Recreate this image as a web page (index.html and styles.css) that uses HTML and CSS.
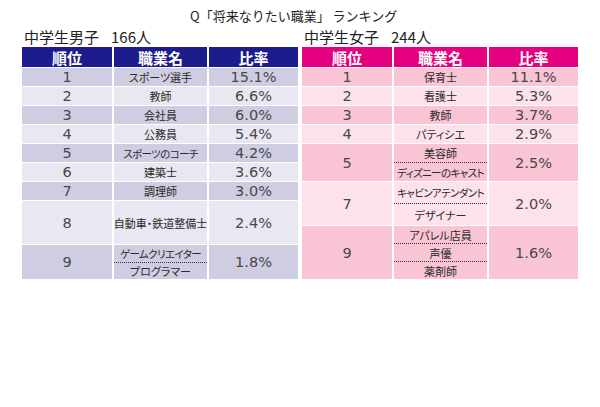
FILE: index.html
```html
<!DOCTYPE html>
<html lang="ja">
<head>
<meta charset="utf-8">
<title>将来なりたい職業ランキング</title>
<link rel="stylesheet" href="styles.css">
</head>
<body>
<div class="page">
  <div class="title">Q「将来なりたい職業」 ランキング</div>
  <div class="panels">
    <section class="panel boys">
      <div class="panel-title">中学生男子<span class="count">166人</span></div>
      <div class="grid">
        <div class="cell head">順位</div><div class="cell head">職業名</div><div class="cell head">比率</div>
        <div class="cell rank odd">1</div><div class="cell job odd">スポーツ選手</div><div class="cell pct odd">15.1%</div>
        <div class="cell rank even">2</div><div class="cell job even">教師</div><div class="cell pct even">6.6%</div>
        <div class="cell rank odd">3</div><div class="cell job odd">会社員</div><div class="cell pct odd">6.0%</div>
        <div class="cell rank even">4</div><div class="cell job even">公務員</div><div class="cell pct even">5.4%</div>
        <div class="cell rank odd">5</div><div class="cell job odd narrow">スポーツのコーチ</div><div class="cell pct odd">4.2%</div>
        <div class="cell rank even">6</div><div class="cell job even">建築士</div><div class="cell pct even">3.6%</div>
        <div class="cell rank odd">7</div><div class="cell job odd">調理師</div><div class="cell pct odd">3.0%</div>
        <div class="cell rank even">8</div><div class="cell job even">自動車・鉄道整備士</div><div class="cell pct even">2.4%</div>
        <div class="cell rank odd">9</div>
        <div class="cell multi odd"><span class="sub narrow">ゲームクリエイター</span><span class="sub">プログラマー</span></div>
        <div class="cell pct odd">1.8%</div>
      </div>
    </section>
    <section class="panel girls">
      <div class="panel-title">中学生女子<span class="count">244人</span></div>
      <div class="grid">
        <div class="cell head">順位</div><div class="cell head">職業名</div><div class="cell head">比率</div>
        <div class="cell rank odd">1</div><div class="cell job odd">保育士</div><div class="cell pct odd">11.1%</div>
        <div class="cell rank even">2</div><div class="cell job even">看護士</div><div class="cell pct even">5.3%</div>
        <div class="cell rank odd">3</div><div class="cell job odd">教師</div><div class="cell pct odd">3.7%</div>
        <div class="cell rank even">4</div><div class="cell job even">パティシエ</div><div class="cell pct even">2.9%</div>
        <div class="cell rank odd">5</div>
        <div class="cell multi odd"><span class="sub">美容師</span><span class="sub narrow">ディズニーのキャスト</span></div>
        <div class="cell pct odd">2.5%</div>
        <div class="cell rank even">7</div>
        <div class="cell multi even"><span class="sub narrow">キャビンアテンダント</span><span class="sub">デザイナー</span></div>
        <div class="cell pct even">2.0%</div>
        <div class="cell rank odd">9</div>
        <div class="cell multi odd"><span class="sub">アパレル店員</span><span class="sub">声優</span><span class="sub">薬剤師</span></div>
        <div class="cell pct odd">1.6%</div>
      </div>
    </section>
  </div>
</div>
</body>
</html>
```

FILE: styles.css
```css
html, body {
  margin: 0;
  padding: 0;
  background: #ffffff;
}

body {
  width: 600px;
  height: 407px;
  font-family: "Noto Sans CJK JP", "Noto Sans", sans-serif;
  color: #333333;
}

.page {
  padding: 6px 0 0 22px;
}

.title {
  height: 20px;
  line-height: 20px;
  font-size: 13px;
  padding-left: 168px;
  color: #222222;
  white-space: nowrap;
}

.panels {
  display: flex;
  gap: 4px;
}

.panel {
  width: 276px;
}

.panel-title {
  height: 21px;
  line-height: 21px;
  font-size: 15px;
  padding-left: 2px;
  color: #222222;
  white-space: nowrap;
}

.count {
  margin-left: 12px;
}

.grid {
  display: grid;
  grid-template-columns: 90px 93px 89px;
  column-gap: 2px;
  row-gap: 1px;
}

.boys .grid {
  grid-template-rows: 20px repeat(7, 18px) 43px 34px;
}

.girls .grid {
  grid-template-rows: 20px repeat(4, 18px) 37px 43px 53px;
}

.cell {
  display: flex;
  align-items: center;
  justify-content: center;
  white-space: nowrap;
  overflow: hidden;
}

.head {
  color: #ffffff;
  font-weight: 700;
  font-size: 15px;
}

.boys .head { background: #1c1c8d; }
.girls .head { background: #e4007f; }

.boys .odd { background: #cfcde1; }
.boys .even { background: #e8e7f2; }
.girls .odd { background: #f9c4d4; }
.girls .even { background: #fde2eb; }

.rank, .pct {
  font-family: "DejaVu Sans", "Noto Sans", sans-serif;
  font-size: 14.5px;
  color: #484848;
}

.job, .sub {
  font-size: 11px;
  font-feature-settings: "palt" 1;
  color: #2a2a2a;
}

.narrow {
  font-size: 10.5px;
  letter-spacing: -0.6px;
}

.multi {
  flex-direction: column;
  align-items: stretch;
}

.sub {
  flex: 1;
  display: flex;
  align-items: center;
  justify-content: center;
}

.sub + .sub {
  border-top: 1px dotted #333333;
}
```
